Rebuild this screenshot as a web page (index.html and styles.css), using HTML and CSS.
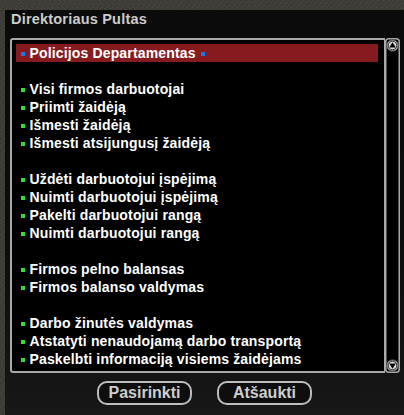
FILE: index.html
```html
<!DOCTYPE html>
<html lang="lt">
<head>
<meta charset="utf-8">
<title>Direktoriaus Pultas</title>
<link rel="stylesheet" href="styles.css">
</head>
<body>
<div class="dialog">
  <div class="title">Direktoriaus Pultas</div>
  <div class="body">
    <div class="listbox">
      <div class="row selected"><span class="dot blue"></span>Policijos Departamentas <span class="dot blue tail"></span></div>
      <div class="row"></div>
      <div class="row"><span class="dot"></span>Visi firmos darbuotojai</div>
      <div class="row"><span class="dot"></span>Priimti žaidėją</div>
      <div class="row"><span class="dot"></span>Išmesti žaidėją</div>
      <div class="row"><span class="dot"></span>Išmesti atsijungusį žaidėją</div>
      <div class="row"></div>
      <div class="row"><span class="dot"></span>Uždėti darbuotojui įspėjimą</div>
      <div class="row"><span class="dot"></span>Nuimti darbuotojui įspėjimą</div>
      <div class="row"><span class="dot"></span>Pakelti darbuotojui rangą</div>
      <div class="row"><span class="dot"></span>Nuimti darbuotojui rangą</div>
      <div class="row"></div>
      <div class="row"><span class="dot"></span>Firmos pelno balansas</div>
      <div class="row"><span class="dot"></span>Firmos balanso valdymas</div>
      <div class="row"></div>
      <div class="row"><span class="dot"></span>Darbo žinutės valdymas</div>
      <div class="row"><span class="dot"></span>Atstatyti nenaudojamą darbo transportą</div>
      <div class="row"><span class="dot"></span>Paskelbti informaciją visiems žaidėjams</div>
    </div>
    <svg class="scrollbar" width="15" height="335" viewBox="0 0 15 335">
      <rect x="0.75" y="0.75" width="13.5" height="333.5" rx="3" fill="#000" stroke="#a9a9a9" stroke-width="1.5"/>
      <circle cx="7.5" cy="7.5" r="5.6" fill="#dcdcdc" stroke="#5a5a5a" stroke-width="1"/>
      <circle cx="7.5" cy="7.5" r="4.3" fill="none" stroke="#000" stroke-width="0.8"/>
      <polygon points="7.5,4.2 10.8,9.6 4.2,9.6" fill="#000"/>
      <circle cx="7.5" cy="327.5" r="5.6" fill="#dcdcdc" stroke="#5a5a5a" stroke-width="1"/>
      <circle cx="7.5" cy="327.5" r="4.3" fill="none" stroke="#000" stroke-width="0.8"/>
      <polygon points="4.2,325.4 10.8,325.4 7.5,330.8" fill="#000"/>
    </svg>
  </div>
  <div class="buttons">
    <button class="btn">Pasirinkti</button>
    <button class="btn">Atšaukti</button>
  </div>
</div>
</body>
</html>
```

FILE: styles.css
```css
html, body {
  margin: 0;
  padding: 0;
}

body {
  width: 404px;
  height: 415px;
  overflow: hidden;
  background-color: #3d3c36;
  background-image:
    repeating-linear-gradient(37deg, rgba(255,255,255,0.04) 0 1px, transparent 1px 3px),
    repeating-linear-gradient(-53deg, rgba(0,0,0,0.08) 0 1px, transparent 1px 4px);
  font-family: "Liberation Sans", Arial, sans-serif;
}

.dialog {
  margin: 10px 0 0 5px;
  width: 399px;
  height: 405px;
  background: linear-gradient(#0b0b0b 0%, #0c0c0c 55%, #131313 85%, #171717 100%);
  display: flex;
  flex-direction: column;
}

.title {
  height: 28px;
  padding-left: 6px;
  font-size: 14.5px;
  font-weight: bold;
  line-height: 18px;
  letter-spacing: 0.2px;
  color: #cbcbcb;
}

.body {
  display: flex;
  margin-left: 5px;
  height: 335px;
}

.listbox {
  box-sizing: border-box;
  width: 375px;
  height: 335px;
  border: 2px solid #a9a9a9;
  border-right-width: 1px;
  border-radius: 3px 0 0 3px;
  background: #000;
  padding: 4px 6px 0 4px;
  overflow: hidden;
}

.row {
  display: flex;
  align-items: center;
  height: 18px;
  padding-left: 5px;
  font-size: 14px;
  font-weight: bold;
  letter-spacing: 0.15px;
  color: #fff;
  white-space: pre;
}

.row.selected {
  background: #861b1f;
}

.dot {
  flex: none;
  width: 4px;
  height: 4px;
  margin: 1px 4.5px 0 0;
  background: #35dc35;
}

.dot.blue {
  background: #1679ea;
}

.dot.tail {
  margin-left: 1px;
}

.scrollbar {
  display: block;
  flex: none;
}

.buttons {
  display: flex;
  justify-content: center;
  gap: 25px;
  margin-top: 8px;
}

.btn {
  box-sizing: border-box;
  width: 95px;
  height: 24px;
  padding: 0;
  border: 2px solid #bdbdbd;
  border-radius: 10px;
  background: #0e0e0e;
  color: #cdcdcd;
  font-family: "Liberation Sans", Arial, sans-serif;
  font-size: 16px;
  font-weight: bold;
  line-height: 20px;
}
```
